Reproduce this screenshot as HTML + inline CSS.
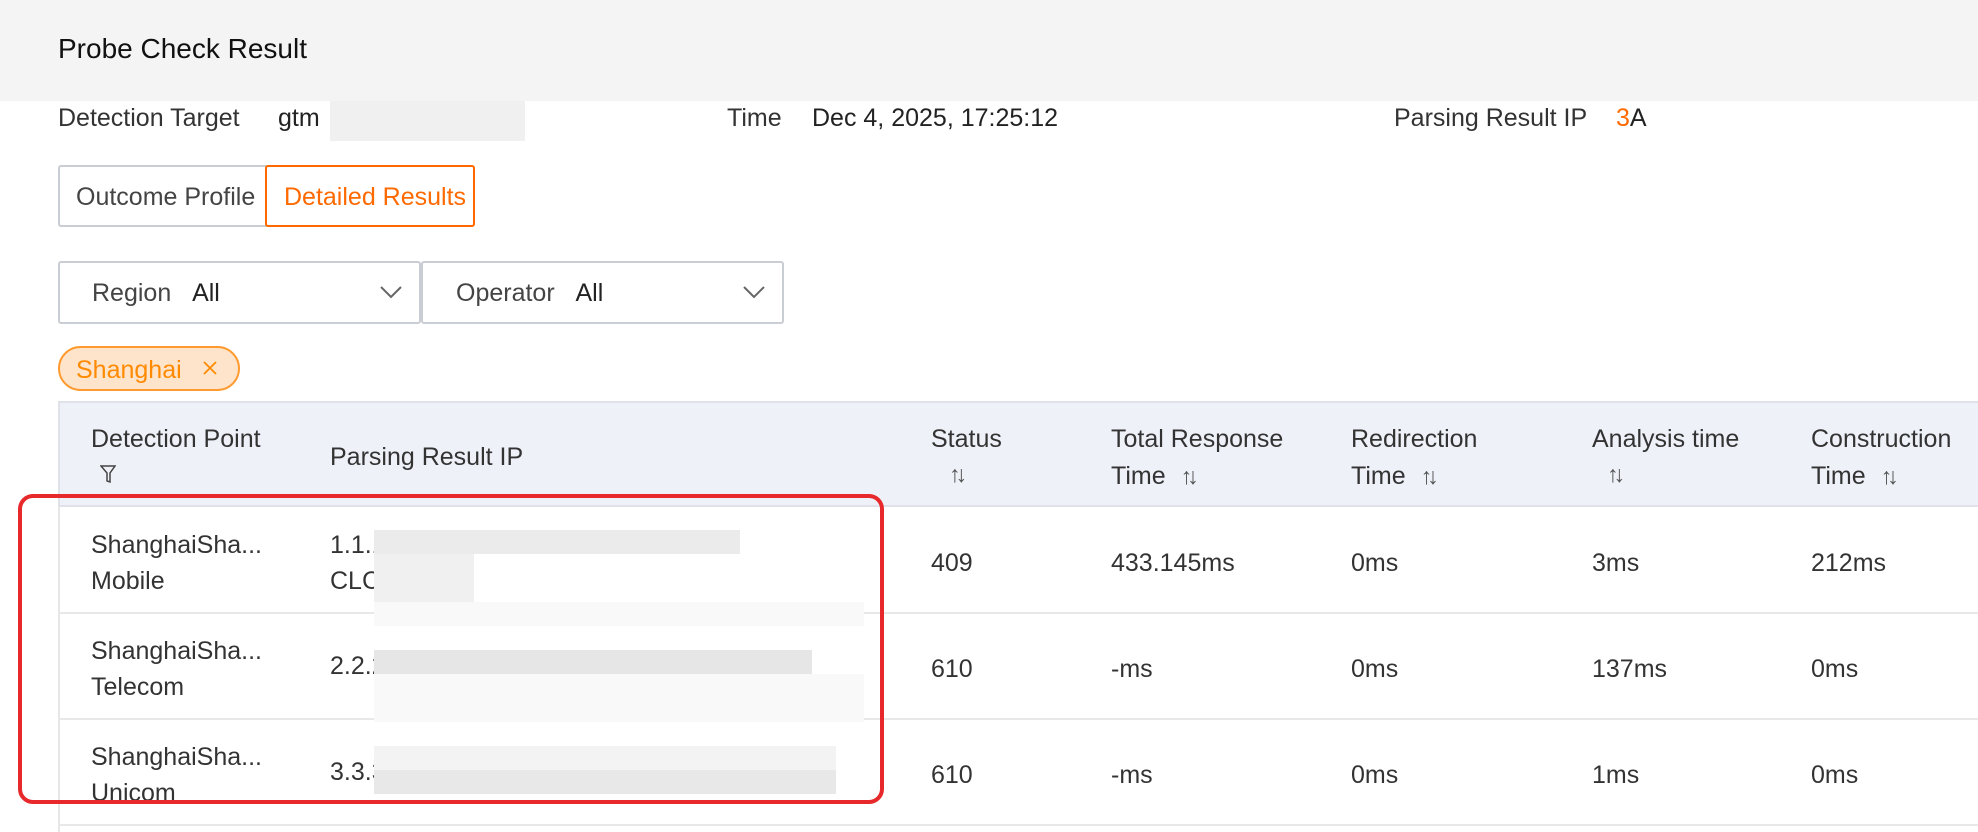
<!DOCTYPE html>
<html><head><meta charset="utf-8"><style>
*{margin:0;padding:0;box-sizing:border-box}
body{width:1978px;height:832px;overflow:hidden;background:#fff;font-family:"Liberation Sans",Arial,sans-serif;color:#333;font-size:25px;position:relative}
.a{position:absolute;white-space:nowrap}
.t{margin-top:3px}
.hdr{position:absolute;left:0;top:0;width:1978px;height:101px;background:#f4f4f4}
.blur{position:absolute;background:#ebebeb}
.sort{font-size:23px;color:#555;letter-spacing:-5px}
</style></head><body>
<div class="hdr"></div>
<div class="a" style="left:58px;top:33px;font-size:28px;color:#111">Probe Check Result</div>

<div class="a t" style="left:58px;top:101px">Detection Target</div>
<div class="a t" style="left:278px;top:101px;color:#222">gtm</div>
<div class="blur" style="left:330px;top:101px;width:195px;height:40px;background:#f0f0f0"></div>
<div class="a t" style="left:727px;top:101px">Time</div>
<div class="a t" style="left:812px;top:101px;color:#222">Dec 4, 2025, 17:25:12</div>
<div class="a t" style="left:1394px;top:101px">Parsing Result IP</div>
<div class="a t" style="left:1616px;top:101px;color:#222"><span style="color:#ff6a00">3</span>A</div>

<div class="a" style="left:58px;top:165px;width:209px;height:62px;border:2px solid #c9cdd4;border-right:none;border-radius:3px 0 0 3px;padding:16px 0 0 16px;color:#444">Outcome Profile</div>
<div class="a" style="left:265px;top:165px;width:210px;height:62px;border:2px solid #ff6a00;border-radius:3px;padding:16px 0 0 17px;color:#ff6a00">Detailed Results</div>

<div class="a" style="left:58px;top:261px;width:363px;height:63px;border:2px solid #c9cdd4;border-radius:3px;padding:16px 0 0 32px;color:#444">Region&nbsp;&nbsp;&nbsp;<span style="color:#222">All</span></div>
<svg class="a" style="left:379px;top:284px" width="24" height="16"><path d="M2 3 L12 13 L22 3" fill="none" stroke="#666" stroke-width="2"/></svg>
<div class="a" style="left:421px;top:261px;width:363px;height:63px;border:2px solid #c9cdd4;border-radius:3px;padding:16px 0 0 33px;color:#444">Operator&nbsp;&nbsp;&nbsp;<span style="color:#222">All</span></div>
<svg class="a" style="left:742px;top:284px" width="24" height="16"><path d="M2 3 L12 13 L22 3" fill="none" stroke="#666" stroke-width="2"/></svg>

<div class="a" style="left:58px;top:346px;width:182px;height:45px;border:2px solid #ff9a2e;background:#ffe4cc;border-radius:23px;padding:8px 0 0 16px;color:#ff8a00">Shanghai</div>
<svg class="a" style="left:202px;top:360px" width="16" height="16"><path d="M2 2L14 14M14 2L2 14" stroke="#ff8a00" stroke-width="1.8"/></svg>

<!-- table -->
<div class="a" style="left:58px;top:401px;width:1920px;height:106px;background:#eef1f8;border-top:2px solid #dfe2e8;border-left:2px solid #dfe2e8;border-bottom:2px solid #dfe2e8"></div>
<div class="a" style="left:58px;top:507px;width:2px;height:325px;background:#e6e6e6"></div>
<div class="a" style="left:58px;top:612px;width:1920px;height:2px;background:#e8e8e8"></div>
<div class="a" style="left:58px;top:718px;width:1920px;height:2px;background:#e8e8e8"></div>
<div class="a" style="left:58px;top:824px;width:1920px;height:2px;background:#e8e8e8"></div>

<div class="a t" style="left:91px;top:422px">Detection Point</div>
<svg class="a" style="left:100px;top:464px" width="16" height="20"><path d="M1 2H15L10 9V18L7 17V9Z" fill="none" stroke="#444" stroke-width="1.5"/></svg>
<div class="a t" style="left:330px;top:440px">Parsing Result IP</div>
<div class="a t" style="left:931px;top:422px">Status</div>
<div class="a sort" style="left:949px;top:461px">↑↓</div>
<div class="a t" style="left:1111px;top:422px">Total Response</div>
<div class="a t" style="left:1111px;top:459px">Time <span class="sort" style="margin-left:8px">↑↓</span></div>
<div class="a t" style="left:1351px;top:422px">Redirection</div>
<div class="a t" style="left:1351px;top:459px">Time <span class="sort" style="margin-left:8px">↑↓</span></div>
<div class="a t" style="left:1592px;top:422px">Analysis time</div>
<div class="a sort" style="left:1607px;top:461px">↑↓</div>
<div class="a t" style="left:1811px;top:422px">Construction</div>
<div class="a t" style="left:1811px;top:459px">Time <span class="sort" style="margin-left:8px">↑↓</span></div>

<!-- rows -->
<div class="a t" style="left:91px;top:528px">ShanghaiSha...</div>
<div class="a t" style="left:91px;top:564px">Mobile</div>
<div class="a t" style="left:330px;top:528px">1.1.1</div>
<div class="a t" style="left:330px;top:564px">CLC</div>
<div class="blur" style="left:374px;top:530px;width:366px;height:24px"></div>
<div class="blur" style="left:374px;top:554px;width:100px;height:48px;background:#f0f0f0"></div>
<div class="blur" style="left:374px;top:602px;width:490px;height:24px;background:#f9f9f9"></div>

<div class="a t" style="left:91px;top:634px">ShanghaiSha...</div>
<div class="a t" style="left:91px;top:670px">Telecom</div>
<div class="a t" style="left:330px;top:649px">2.2.2</div>
<div class="blur" style="left:374px;top:650px;width:438px;height:24px;background:#e6e6e6"></div>
<div class="blur" style="left:374px;top:674px;width:490px;height:48px;background:#f9f9f9"></div>

<div class="a t" style="left:91px;top:740px">ShanghaiSha...</div>
<div class="a t" style="left:91px;top:776px">Unicom</div>
<div class="a t" style="left:330px;top:755px">3.3.3</div>
<div class="blur" style="left:374px;top:746px;width:462px;height:24px;background:#f3f3f3"></div>
<div class="blur" style="left:374px;top:770px;width:462px;height:24px;background:#e8e8e8"></div>

<div class="a t" style="left:931px;top:546px">409</div>
<div class="a t" style="left:1111px;top:546px">433.145ms</div>
<div class="a t" style="left:1351px;top:546px">0ms</div>
<div class="a t" style="left:1592px;top:546px">3ms</div>
<div class="a t" style="left:1811px;top:546px">212ms</div>

<div class="a t" style="left:931px;top:652px">610</div>
<div class="a t" style="left:1111px;top:652px">-ms</div>
<div class="a t" style="left:1351px;top:652px">0ms</div>
<div class="a t" style="left:1592px;top:652px">137ms</div>
<div class="a t" style="left:1811px;top:652px">0ms</div>

<div class="a t" style="left:931px;top:758px">610</div>
<div class="a t" style="left:1111px;top:758px">-ms</div>
<div class="a t" style="left:1351px;top:758px">0ms</div>
<div class="a t" style="left:1592px;top:758px">1ms</div>
<div class="a t" style="left:1811px;top:758px">0ms</div>

<div class="a" style="left:18px;top:494px;width:866px;height:310px;border:4px solid #e8292b;border-radius:15px"></div>
</body></html>
